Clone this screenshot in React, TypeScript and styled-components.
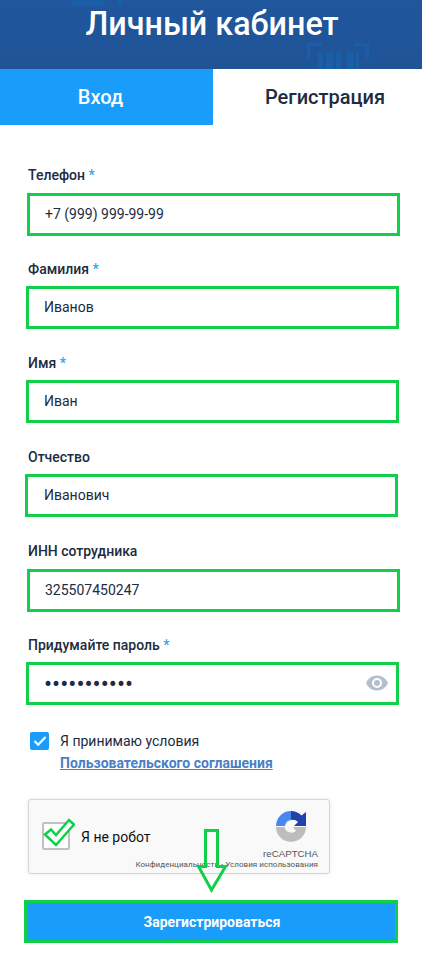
import styled, { createGlobalStyle } from 'styled-components'

const GlobalStyle = createGlobalStyle`
  html, body {
    margin: 0;
    padding: 0;
    background: #fff;
    font-family: Roboto, "Liberation Sans", sans-serif;
    color: #212b40;
  }
  * {
    box-sizing: border-box;
  }
`

const fields = [
  { label: 'Телефон', value: '+7 (999) 999-99-99', required: true, top: 8, shift: -1 },
  { label: 'Фамилия', value: 'Иванов', required: true, top: 7, shift: -2 },
  { label: 'Имя', value: 'Иван', required: true, top: 7, shift: -2 },
  { label: 'Отчество', value: 'Иванович', required: false, top: 7, shift: -3 },
  { label: 'ИНН сотрудника', value: '325507450247', required: false, top: 8, shift: -1 },
]

function App() {
  return (
    <Page>
      <GlobalStyle />
      <Header>
        <HeaderArt width="422" height="69" viewBox="0 0 422 69">
          <g fill="#1b5ea8">
            <rect x="72" y="0" width="32" height="6" />
            <rect x="117" y="0" width="6" height="6" />
            <path d="M307 43h15v3h-12v12h-3zM369 43h-15v3h12v12h3z" />
            <rect x="318" y="52" width="5" height="17" />
            <rect x="326" y="52" width="7" height="17" />
            <rect x="336" y="52" width="5" height="17" />
            <rect x="347" y="52" width="7" height="17" />
            <rect x="356" y="52" width="3" height="17" />
          </g>
        </HeaderArt>
        <Title>Личный кабинет</Title>
      </Header>
      <Tabs>
        <Tab $active>Вход</Tab>
        <Tab>Регистрация</Tab>
      </Tabs>
      <Form>
        {fields.map((f) => (
          <Field key={f.label}>
            <Label>
              {f.label}
              {f.required && <Star> *</Star>}
            </Label>
            <Input $top={f.top} $shift={f.shift} defaultValue={f.value} readOnly />
          </Field>
        ))}
        <Field>
          <Label>
            Придумайте пароль<Star> *</Star>
          </Label>
          <PasswordWrap>
            <PasswordInput $top={7} $shift={-2} type="password" defaultValue="12345678901" readOnly />
            <EyeIcon viewBox="0 0 24 24">
              <path
                fill="#b4bfcd"
                d="M12 4.500C7 4.500 2.700 7.600 1 12c1.700 4.400 6 7.500 11 7.500s9.300-3.100 11-7.500c-1.700-4.400-6-7.500-11-7.500zm0 12.500a5 5 0 1 1 0-10 5 5 0 0 1 0 10zm0-8a3 3 0 1 0 0 6 3 3 0 0 0 0-6z"
              />
            </EyeIcon>
          </PasswordWrap>
        </Field>
        <Terms>
          <CheckBox>
            <svg width="14" height="12" viewBox="0 0 14 12">
              <path d="M1.500 6l3.700 3.700L12.500 2" fill="none" stroke="#fff" strokeWidth="2.200" />
            </svg>
          </CheckBox>
          <TermsText>
            <span>Я принимаю условия</span>
            <TermsLink href="#">Пользовательского соглашения</TermsLink>
          </TermsText>
        </Terms>
        <Captcha>
          <RobotBox />
          <RobotCheck width="32" height="30" viewBox="0 0 32 30">
            <path
              d="M2 16.500l6-5 5 5.500L26 2l5 4.500L13 27z"
              fill="#fff"
              stroke="#10d04a"
              strokeWidth="2.500"
            />
          </RobotCheck>
          <RobotText>Я не робот</RobotText>
          <CaptchaBrand>
            <svg width="32" height="32" viewBox="0 0 32 32">
              <path d="M16 1A15 15 0 0 0 1 16H10A7 7 0 0 1 16 10z" fill="#4a86f0" />
              <path d="M16 1A15 15 0 0 1 26.500 5.500L31 2V16H19L23 12A7 7 0 0 0 16 10z" fill="#2142ad" />
              <path d="M1 17H9.500A7 7 0 0 0 21 21L18 17H31A15 15 0 0 1 1 17z" fill="#bdbdbd" />
            </svg>
            <BrandName>reCAPTCHA</BrandName>
          </CaptchaBrand>
          <CaptchaLinks>Конфиденциальность - Условия использования</CaptchaLinks>
        </Captcha>
        <Submit type="button">Зарегистрироваться</Submit>
        <Arrow width="32" height="68" viewBox="0 0 32 68">
          <path
            d="M9.500 3.500h12v36h8L15.500 63 2.500 39.500h7z"
            fill="none"
            stroke="#10d04a"
            strokeWidth="3"
          />
        </Arrow>
      </Form>
    </Page>
  )
}

const Page = styled.div`
  width: 422px;
  height: 956px;
  overflow: hidden;
  background: #fff;
`
const Header = styled.div`
  position: relative;
  height: 69px;
  background: linear-gradient(180deg, #20569c 0%, #1f5497 100%);
  display: flex;
  justify-content: center;
`
const HeaderArt = styled.svg`
  position: absolute;
  left: 0;
  top: 0;
`
const Title = styled.h1`
  position: relative;
  margin: 0;
  padding: 5px 0 0 2px;
  font-size: 32.300px;
  line-height: 38px;
  font-weight: 500;
  color: #fff;
`
const Tabs = styled.div`
  display: flex;
  height: 56px;
`
const Tab = styled.div<{ $active?: boolean }>`
  width: ${(p) => (p.$active ? '213px' : '209px')};
  padding: ${(p) => (p.$active ? '0 12px 0 0' : '0 0 0 15px')};
  display: flex;
  align-items: center;
  justify-content: center;
  font-size: 20px;
  font-weight: 500;
  background: ${(p) => (p.$active ? '#199cfa' : '#fff')};
  color: ${(p) => (p.$active ? '#fff' : '#212b40')};
`
const Form = styled.div`
  position: relative;
  padding: 40px 0 0 28px;
`
const Field = styled.div`
  height: 94px;
`
const Label = styled.div`
  height: 20px;
  font-size: 14px;
  line-height: 20px;
  font-weight: 500;
  color: #212b40;
`
const Star = styled.span`
  color: #2ca4fb;
`
const Input = styled.input<{ $top: number; $shift: number }>`
  display: block;
  width: 373px;
  height: 43px;
  margin: ${(p) => p.$top}px 0 0 ${(p) => p.$shift}px;
  padding: 0 14px 2px ${(p) => (p.$shift === -3 ? 16 : 15)}px;
  border: 3px solid #10d04a;
  border-radius: 0;
  outline: none;
  background: #fff;
  font-family: Roboto, "Liberation Sans", sans-serif;
  font-size: 14px;
  color: #212b40;
`
const PasswordInput = styled(Input)`
  padding-bottom: 0;
  font-size: 24px;
`
const PasswordWrap = styled.div`
  position: relative;
`
const EyeIcon = styled.svg`
  position: absolute;
  right: 33px;
  top: 9px;
  width: 24px;
  height: 24px;
`
const Terms = styled.div`
  display: flex;
  margin: 3px 0 0 2px;
`
const CheckBox = styled.div`
  width: 19px;
  height: 18px;
  border-radius: 2px;
  background: #199cfa;
  display: flex;
  align-items: center;
  justify-content: center;
`
const TermsText = styled.div`
  display: flex;
  flex-direction: column;
  gap: 3px;
  margin-left: 11px;
  font-size: 14px;
  line-height: 19px;
  color: #212b40;
`
const TermsLink = styled.a`
  font-size: 14px;
  font-weight: 700;
  color: #4a7fc4;
  text-decoration: underline;
`
const Captcha = styled.div`
  position: relative;
  width: 302px;
  height: 75px;
  margin-top: 26px;
  border: 1px solid #d6d6d6;
  border-radius: 3px;
  background: #f9f9f9;
  box-shadow: 0 0 4px rgba(0, 0, 0, 0.08);
`
const RobotBox = styled.div`
  position: absolute;
  left: 13px;
  top: 22px;
  width: 28px;
  height: 28px;
  border: 2px solid #c1c1c1;
  border-radius: 2px;
  background: #fff;
`
const RobotCheck = styled.svg`
  position: absolute;
  left: 14px;
  top: 18px;
`
const RobotText = styled.span`
  position: absolute;
  left: 52px;
  top: 28px;
  font-size: 14px;
  line-height: 18px;
  color: #111;
`
const CaptchaBrand = styled.div`
  position: absolute;
  right: 11px;
  top: 10px;
  display: flex;
  flex-direction: column;
  align-items: center;
`
const BrandName = styled.span`
  margin-top: 6px;
  font-family: "Liberation Sans", Arial, sans-serif;
  font-size: 9.700px;
  line-height: 12px;
  color: #555;
`
const CaptchaLinks = styled.span`
  position: absolute;
  right: 11px;
  top: 59px;
  font-size: 8px;
  line-height: 11px;
  letter-spacing: 0.05px;
  white-space: nowrap;
  color: #555;
`
const Submit = styled.button`
  display: block;
  width: 374px;
  height: 43px;
  margin: 26px 0 0 -4px;
  padding: 0 0 0 2px;
  border: 3px solid #10d04a;
  border-radius: 0;
  background: #199cfa;
  color: #fff;
  font-family: Roboto, "Liberation Sans", sans-serif;
  font-size: 14px;
  font-weight: 700;
`
const Arrow = styled.svg`
  position: absolute;
  left: 196px;
  top: 702px;
`

export default App
